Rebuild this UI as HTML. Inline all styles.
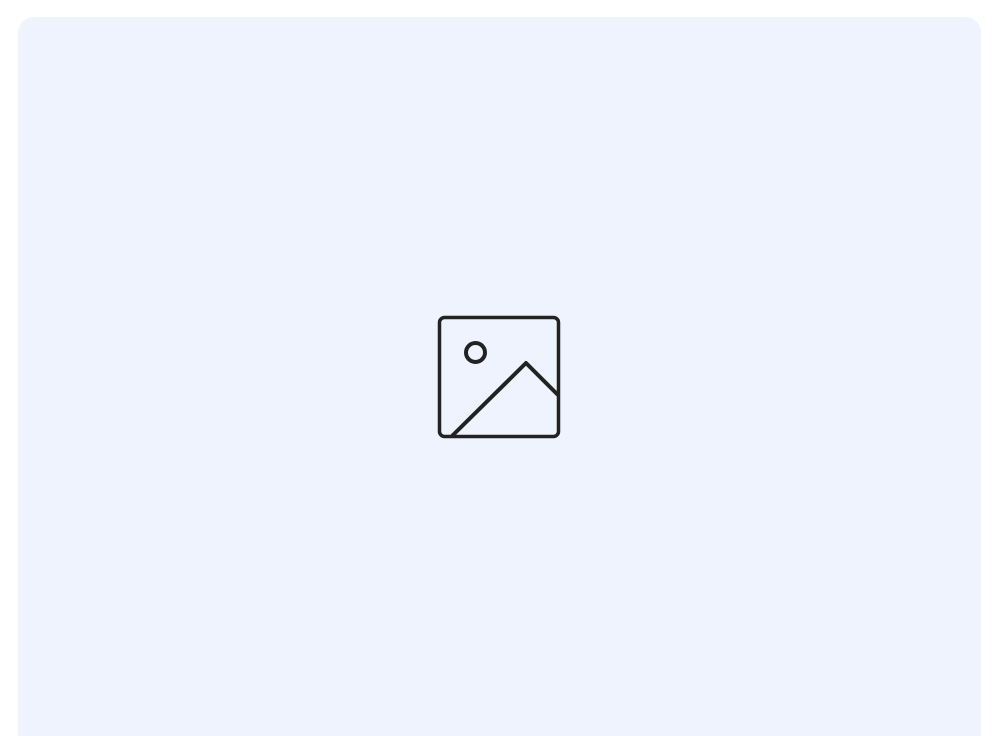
<!DOCTYPE html>
<html><head><style>
html,body{margin:0;padding:0;background:#fff;width:999px;height:736px;overflow:hidden}
.card{position:absolute;left:18px;top:17px;width:963px;height:719px;background:#eef3fe;border-radius:16px 16px 0 0}
svg{position:absolute;left:0;top:0}
</style></head><body>
<div class="card"></div>
<svg width="999" height="736" viewBox="0 0 999 736">
<rect x="439.5" y="317.5" width="119" height="119" rx="5" fill="none" stroke="#222" stroke-width="3.5"/>
<circle cx="475.5" cy="352.5" r="9.5" fill="none" stroke="#222" stroke-width="4"/>
<polyline points="452,436 526,363 558,395" fill="none" stroke="#222" stroke-width="4" stroke-linejoin="round"/>
</svg>
</body></html>
